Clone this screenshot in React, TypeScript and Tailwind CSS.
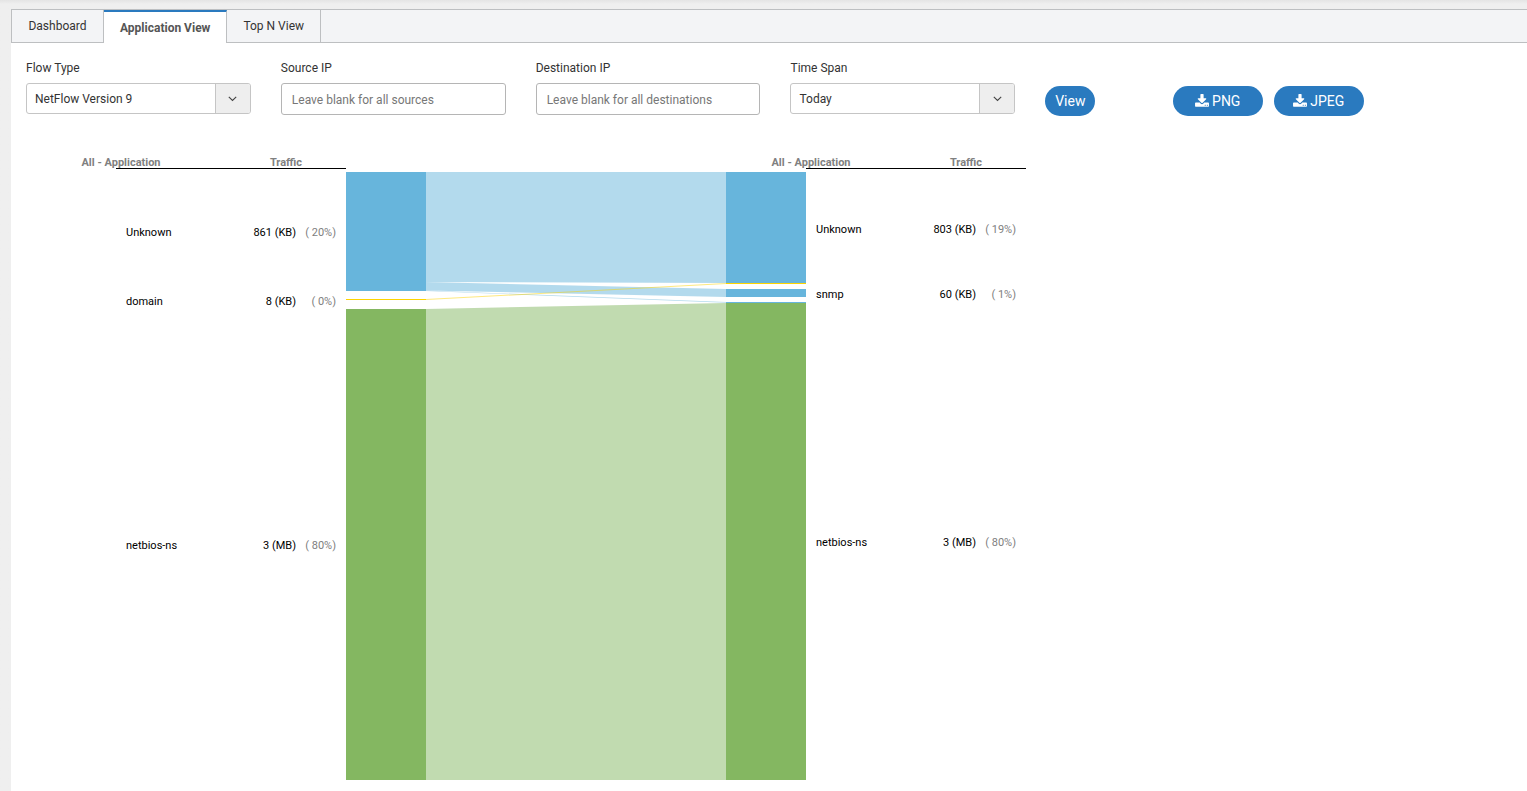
import { useState } from "react";
import type { ReactNode } from "react";

type Band = {
  name: string;
  traffic: string;
  percent: string;
  labelY: number;
};

type Rect = {
  y: number;
  height: number;
  color: string;
};

type Flow = {
  color: string;
  // top and height of the band on each side
  from: [number, number];
  to: [number, number];
};

const BLUE = "#67b5dc";
const YELLOW = "#fdd400";
const GREEN = "#84b761";

const tabs = ["Dashboard", "Application View", "Top N View"];

const sourceBands: Band[] = [
  { name: "Unknown", traffic: "861 (KB)", percent: "( 20%)", labelY: 64 },
  { name: "domain", traffic: "8 (KB)", percent: "( 0%)", labelY: 133 },
  { name: "netbios-ns", traffic: "3 (MB)", percent: "( 80%)", labelY: 377 },
];

const destinationBands: Band[] = [
  { name: "Unknown", traffic: "803 (KB)", percent: "( 19%)", labelY: 61 },
  { name: "snmp", traffic: "60 (KB)", percent: "( 1%)", labelY: 126 },
  { name: "netbios-ns", traffic: "3 (MB)", percent: "( 80%)", labelY: 374 },
];

const sourceRects: Rect[] = [
  { y: 0, height: 119, color: BLUE },
  { y: 127, height: 1, color: YELLOW },
  { y: 137, height: 471, color: GREEN },
];

const destinationRects: Rect[] = [
  { y: 0, height: 111, color: BLUE },
  { y: 111, height: 1, color: YELLOW },
  { y: 117, height: 8, color: BLUE },
  { y: 130, height: 1, color: BLUE },
  { y: 131, height: 477, color: GREEN },
];

const flows: Flow[] = [
  { color: BLUE, from: [0, 110], to: [0, 111] },
  { color: BLUE, from: [110, 8.4], to: [117, 8] },
  { color: BLUE, from: [118.4, 0.6], to: [130, 0.8] },
  { color: YELLOW, from: [127, 1], to: [111, 1] },
  { color: GREEN, from: [137, 471], to: [131, 477] },
];

function flowPoints({ from, to }: Flow) {
  return `80,${from[0]} 380,${to[0]} 380,${to[0] + to[1]} 80,${from[0] + from[1]}`;
}

// x is the right-aligned edge of the percent column
function BandLabels({ x, lineWidth, bands }: { x: number; lineWidth: number; bands: Band[] }) {
  return (
    <>
      <rect x={x + 10 - lineWidth} y={-4} width={lineWidth} height={1} />
      <text x={x - 50} y={-6} textAnchor="middle" className="fill-[#808080] font-bold">
        Traffic
      </text>
      {bands.map((band) => (
        <g key={band.name}>
          <text x={x - 40} y={band.labelY} textAnchor="end">
            {band.traffic}
          </text>
          <text x={x} y={band.labelY} textAnchor="end" className="fill-[#808080]">
            {band.percent}
          </text>
        </g>
      ))}
    </>
  );
}

function BandNames({ x, bands }: { x: number; bands: Band[] }) {
  return (
    <>
      <text x={x - 5} y={-6} textAnchor="middle" className="fill-[#808080] font-bold">
        All - Application
      </text>
      {bands.map((band) => (
        <text key={band.name} x={x} y={band.labelY}>
          {band.name}
        </text>
      ))}
    </>
  );
}

function FlowChart() {
  return (
    <svg
      width={1010}
      height={630}
      role="img"
      aria-label="Application traffic from source to destination"
      className="block text-[11px]"
    >
      <g transform="translate(320 22)">
        <BandNames x={-220} bands={sourceBands} />
        <BandLabels x={-10} lineWidth={230} bands={sourceBands} />
        <BandNames x={470} bands={destinationBands} />
        <BandLabels x={670} lineWidth={220} bands={destinationBands} />
        {flows.map((flow, i) => (
          <polygon key={i} points={flowPoints(flow)} fill={flow.color} opacity={0.5} />
        ))}
        {sourceRects.map((rect) => (
          <rect key={rect.y} y={rect.y} width={80} height={rect.height} fill={rect.color} />
        ))}
        {destinationRects.map((rect) => (
          <rect key={rect.y} x={380} y={rect.y} width={80} height={rect.height} fill={rect.color} />
        ))}
      </g>
    </svg>
  );
}

function DownloadIcon() {
  return (
    <svg width="14" height="15" viewBox="0 0 1664 1792" fill="currentColor" aria-hidden="true">
      <path d="M1280 1344q0-26-19-45t-45-19-45 19-19 45 19 45 45 19 45-19 19-45zm256 0q0-26-19-45t-45-19-45 19-19 45 19 45 45 19 45-19 19-45zm128-224v320q0 40-28 68t-68 28h-1472q-40 0-68-28t-28-68v-320q0-40 28-68t68-28h465l135 136q58 56 136 56t136-56l136-136h464q40 0 68 28t28 68zm-325-569q17 41-14 70l-448 448q-18 19-45 19t-45-19l-448-448q-31-29-14-70 17-39 59-39h256v-448q0-26 19-45t45-19h256q26 0 45 19t19 45v448h256q42 0 59 39z" />
    </svg>
  );
}

function Field({ id, label, children }: { id: string; label: string; children: ReactNode }) {
  return (
    <div className="col-span-2">
      <label htmlFor={id} className="mb-[7px] block leading-4">
        {label}
      </label>
      {children}
    </div>
  );
}

function SelectBox({ id, options }: { id: string; options: string[] }) {
  return (
    <div className="relative">
      <select
        id={id}
        className="block h-[31px] w-full appearance-none rounded-[3px] border border-[#c5c5c5] bg-white pr-10 pl-2 text-[#333]"
      >
        {options.map((option) => (
          <option key={option}>{option}</option>
        ))}
      </select>
      <span className="pointer-events-none absolute inset-y-px right-px flex w-[35px] items-center justify-center rounded-r-[2px] border-l border-[#c5c5c5] bg-[#eee]">
        <svg width="9" height="6" viewBox="0 0 9 6" fill="none" stroke="#444" strokeWidth="1.1">
          <path d="M0.8 0.8 4.5 4.5 8.2 0.8" />
        </svg>
      </span>
    </div>
  );
}

function TextBox({ id, placeholder }: { id: string; placeholder: string }) {
  return (
    <input
      id={id}
      type="text"
      placeholder={placeholder}
      className="block h-8 w-full rounded-[3px] border border-[#b5b5b5] bg-white px-[10px] pt-px placeholder:text-[#777]"
    />
  );
}

function PillButton({ className, children }: { className: string; children: ReactNode }) {
  return (
    <button
      type="button"
      className={`flex h-[30px] shrink-0 cursor-pointer items-center justify-center gap-[3px] rounded-full bg-[#2a7abf] text-sm text-white ${className}`}
    >
      {children}
    </button>
  );
}

export default function App() {
  const [active, setActive] = useState("Application View");

  return (
    <div className="flex min-h-screen flex-col bg-[#efefef] bg-linear-to-b from-[#e4e4e4] from-0% to-[#efefef] to-[4px] pt-[9px] pl-[11px] font-[Roboto,sans-serif] text-xs text-[#333]">
      <div role="tablist" className="flex h-[34px] border-t border-l border-[#bdbfc1] bg-[#f3f4f6]">
        {tabs.map((tab) => (
          <button
            key={tab}
            type="button"
            role="tab"
            aria-selected={tab === active}
            onClick={() => setActive(tab)}
            className={
              tab === active
                ? "min-w-[92px] border-t-2 border-r border-t-[#2a7abf] border-r-[#bdbfc1] bg-white px-4 font-bold text-[#555]"
                : "min-w-[92px] border-r border-b border-[#bdbfc1] px-4"
            }
          >
            {tab}
          </button>
        ))}
        <div className="flex-1 border-b border-[#bdbfc1]" />
      </div>

      <main className="flex-1 bg-white pt-[17px] pr-[2px] pl-[15px]">
        <form className="grid grid-cols-12 gap-x-[30px]">
          <Field id="flow-type" label="Flow Type">
            <SelectBox id="flow-type" options={["NetFlow Version 9"]} />
          </Field>
          <Field id="source-ip" label="Source IP">
            <TextBox id="source-ip" placeholder="Leave blank for all sources" />
          </Field>
          <Field id="destination-ip" label="Destination IP">
            <TextBox id="destination-ip" placeholder="Leave blank for all destinations" />
          </Field>
          <Field id="time-span" label="Time Span">
            <SelectBox id="time-span" options={["Today"]} />
          </Field>
          <div className="pt-[26px]">
            <PillButton className="w-[50px]">View</PillButton>
          </div>
          <div className="col-span-3 flex gap-[11px] pt-[26px]">
            <PillButton className="w-[90px]">
              <DownloadIcon />
              PNG
            </PillButton>
            <PillButton className="w-[90px]">
              <DownloadIcon />
              JPEG
            </PillButton>
          </div>
        </form>

        <div className="mt-[34px]">
          <FlowChart />
        </div>
      </main>
    </div>
  );
}
